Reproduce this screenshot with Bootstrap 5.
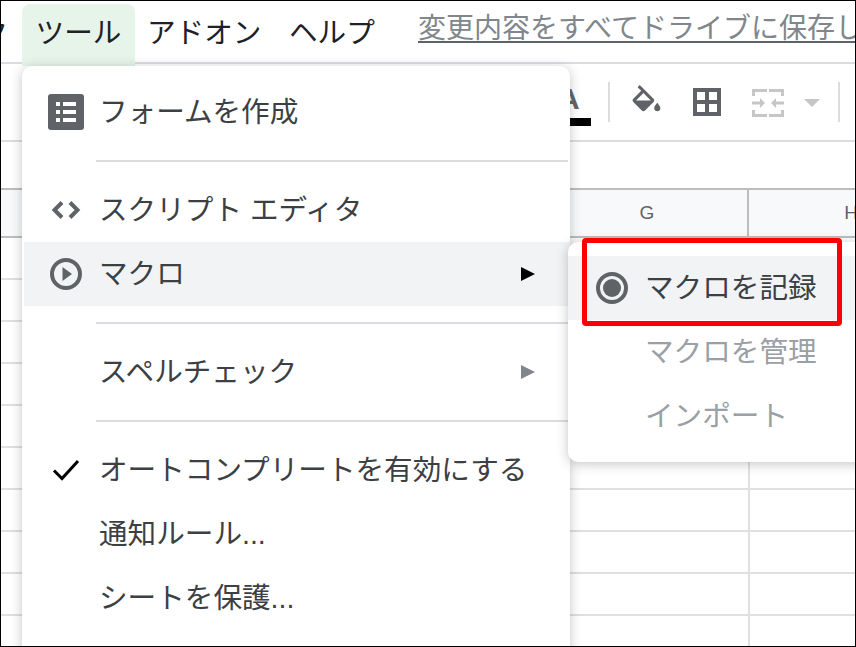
<!DOCTYPE html>
<html lang="ja">
<head>
<meta charset="utf-8">
<title>ツール メニュー</title>
<link href="https://cdn.jsdelivr.net/npm/bootstrap@5.3.0/dist/css/bootstrap.min.css" rel="stylesheet">
<style>
html,body{margin:0;background:#fff;overflow:hidden}
body{font-family:"Liberation Sans","Noto Sans CJK JP",sans-serif;color:#202124}
.frame{width:856px;height:647px;border:1px solid #000;position:relative;overflow:hidden;background:#fff}
.menubar{height:61px;border-bottom:2px solid #dadce0;box-sizing:content-box;font-size:28.6px;line-height:64px;white-space:nowrap}
.menubar span{display:block}
.m-cut{width:21px;padding-right:14px;overflow:hidden;direction:rtl;flex:none}
.m-tools{background:#e6f4ea;border-radius:8px 8px 0 0;width:113px;height:62px;margin-top:3px;line-height:59px;text-align:center;flex:none}
.m-addon{margin-left:12px;width:113px;flex:none}
.m-help{margin-left:29px;width:83px;flex:none}
.m-save{margin-left:46px;font-size:28px;color:#80868b;flex:none;height:40px;line-height:56px;border-bottom:2px solid #5f6368;box-sizing:content-box}
.toolbar{height:76px;border-bottom:2px solid #dadce0;box-sizing:content-box;padding-left:549px}
.tb-a{width:41px;font-size:30px;line-height:34px;font-weight:700;color:#5f6368;margin-top:18px;padding-left:8px;overflow:hidden;flex:none;border-bottom:8px solid #000;box-sizing:border-box;height:44px}
.tb-sep{width:2px;height:40px;background:#dadce0;flex:none;margin-top:18px}
.formula{height:46px}
.colhead{height:50px;background:#f8f9fa;border-top:2px solid #bdbdbd;border-bottom:2px solid #bdbdbd;font-size:19px;color:#5f6368;padding-left:546px;white-space:nowrap}
.colhead div{height:46px;line-height:46px;text-align:center;flex:none}
.col-g{width:202px;border-right:2px solid #bdbdbd}
.col-h{width:204px}
.sheet-rows{position:relative}
.sheet-row{height:42px;border-bottom:2px solid #e0e0e0}
.col-line{position:absolute;left:747px;top:0;bottom:0;width:2px;background:#e0e0e0}
.gmenu{position:absolute;background:#fff;border-radius:10px;box-shadow:0 2px 12px rgba(60,64,67,.3);font-size:28.6px;color:#3c4043}
.main-menu{left:21px;top:65px;width:548px;height:640px;padding-top:14px}
.sub-menu{left:567px;top:241px;width:320px;height:220px;padding-top:14px}
.gitem{height:64px;display:flex;align-items:center;line-height:1;white-space:nowrap}
.gitem.active{background:#f1f3f4}
.main-menu .gitem.active{margin-left:2px}
.main-menu .gitem.active .slot{margin-left:24px}
.slot{width:36px;height:36px;margin-left:26px;margin-right:15px;flex:none;display:flex;align-items:center;justify-content:center}
.gsep{height:2px;background:#dadce0;margin:16px 2px 16px 74px}
.arrow{margin-left:auto;margin-right:35px;flex:none}
.sub-menu .gitem{padding-left:77px;position:relative}
.sub-menu .slot{position:absolute;left:26px;margin:0}
.gitem-text{position:relative;top:0;padding-top:1px}
.dim{color:#9aa0a6}
.redbox{position:absolute;left:581px;top:237px;width:260px;height:88px;border:5px solid #f00;border-radius:4px}
</style>
</head>
<body>
<div class="frame">
  <div class="menubar d-flex">
    <span class="m-cut">ク</span>
    <span class="m-tools">ツール</span>
    <span class="m-addon">アドオン</span>
    <span class="m-help">ヘルプ</span>
    <span class="m-save">変更内容をすべてドライブに保存し</span>
  </div>
  <div class="toolbar d-flex">
    <div class="tb-a">A</div>
    <div class="tb-sep" style="margin-left:17px"></div>
    <svg style="margin:21px 0 0 18px;flex:none" width="37" height="37" viewBox="0 0 24 24"><path fill="#5f6368" d="M16.560 8.940 7.620 0 6.210 1.410l2.380 2.380-5.150 5.150c-.59.59-.59 1.540 0 2.120l5.500 5.500c.29.29.68.44 1.060.44s.77-.15 1.060-.44l5.500-5.500c.59-.58.59-1.530 0-2.120zM5.210 10 10 5.210 14.790 10H5.210zM19 11.500s-2 2.170-2 3.500c0 1.100.9 2 2 2s2-.9 2-2c0-1.330-2-3.500-2-3.500z"/></svg>
    <svg style="margin:24px 0 0 28px;flex:none" width="28" height="28" viewBox="0 0 28 28"><path d="M0 0h28v28H0zM4 4v8h8V4zm12 0v8h8V4zM4 16v8h8v-8zm12 0v8h8v-8z" fill="#5f6368" fill-rule="evenodd"/></svg>
    <svg style="margin:25px 0 0 31px;flex:none" width="32" height="28" viewBox="0 0 32 28" fill="#c6c6c6"><path d="M0 0h15v3H3v4H0zM17 0h15v7h-3V3H17zM0 21h3v4h12v3H0zM29 21h3v7H17v-3h12zM0 12.500h8V9l5 5-5 5v-3.500H0zM32 12.500h-8V9l-5 5 5 5v-3.500h8z"/></svg>
    <svg style="margin:35px 0 0 20px;flex:none" width="16" height="8" viewBox="0 0 16 8"><path d="M0 0h16L8 8z" fill="#c6c6c6"/></svg>
    <div class="tb-sep" style="margin-left:18px"></div>
  </div>
  <div class="formula"></div>
  <div class="colhead d-flex">
    <div class="col-g">G</div>
    <div class="col-h">H</div>
  </div>
  <div class="sheet-rows">
    <div class="col-line"></div>
    <div class="sheet-row"></div><div class="sheet-row"></div><div class="sheet-row"></div>
    <div class="sheet-row"></div><div class="sheet-row"></div><div class="sheet-row"></div>
    <div class="sheet-row"></div><div class="sheet-row"></div><div class="sheet-row"></div>
    <div class="sheet-row"></div>
  </div>

  <div class="gmenu main-menu">
    <div class="gitem"><span class="slot"><svg width="36" height="36" viewBox="0 0 36 36"><rect width="36" height="36" rx="3" fill="#5f6368"/><path d="M8 8h4v4H8zM15 8h13v4H15zM8 16h4v4H8zM15 16h13v4H15zM8 24h4v4H8zM15 24h13v4H15z" fill="#fff"/></svg></span><span class="gitem-text">フォームを作成</span></div>
    <div class="gsep"></div>
    <div class="gitem"><span class="slot"><svg width="30" height="20" viewBox="0 0 30 20" fill="none" stroke="#5f6368" stroke-width="4"><path d="M11 2.500 3.500 10 11 17.500M19 2.500 26.500 10 19 17.500"/></svg></span><span class="gitem-text">スクリプト エディタ</span></div>
    <div class="gitem active"><span class="slot"><svg width="32" height="32" viewBox="0 0 32 32"><circle cx="16" cy="16" r="14" fill="none" stroke="#5f6368" stroke-width="4"/><path d="M12.500 9 22 16l-9.500 7z" fill="#5f6368"/></svg></span><span class="gitem-text">マクロ</span><svg class="arrow" width="14" height="14" viewBox="0 0 14 14"><path d="M0 0l14 7-14 7z" fill="#000"/></svg></div>
    <div class="gsep"></div>
    <div class="gitem"><span class="slot"></span><span class="gitem-text">スペルチェック</span><svg class="arrow" width="14" height="14" viewBox="0 0 14 14"><path d="M0 0l14 7-14 7z" fill="#80868b"/></svg></div>
    <div class="gsep"></div>
    <div class="gitem"><span class="slot"><svg width="28" height="22" viewBox="0 0 28 22" fill="none" stroke="#000" stroke-width="3"><path d="M2 11.500 10 19.500 26 2"/></svg></span><span class="gitem-text">オートコンプリートを有効にする</span></div>
    <div class="gitem"><span class="slot"></span><span class="gitem-text">通知ルール...</span></div>
    <div class="gitem"><span class="slot"></span><span class="gitem-text">シートを保護...</span></div>
  </div>

  <div class="gmenu sub-menu">
    <div class="gitem active"><span class="slot"><svg width="32" height="32" viewBox="0 0 32 32"><circle cx="16" cy="16" r="14" fill="none" stroke="#5f6368" stroke-width="4"/><circle cx="16" cy="16" r="9" fill="#5f6368"/></svg></span><span class="gitem-text">マクロを記録</span></div>
    <div class="gitem dim"><span class="gitem-text">マクロを管理</span></div>
    <div class="gitem dim"><span class="gitem-text">インポート</span></div>
  </div>
  <div class="redbox"></div>
</div>
<script src="https://cdn.jsdelivr.net/npm/bootstrap@5.3.0/dist/js/bootstrap.bundle.min.js"></script>
</body>
</html>
